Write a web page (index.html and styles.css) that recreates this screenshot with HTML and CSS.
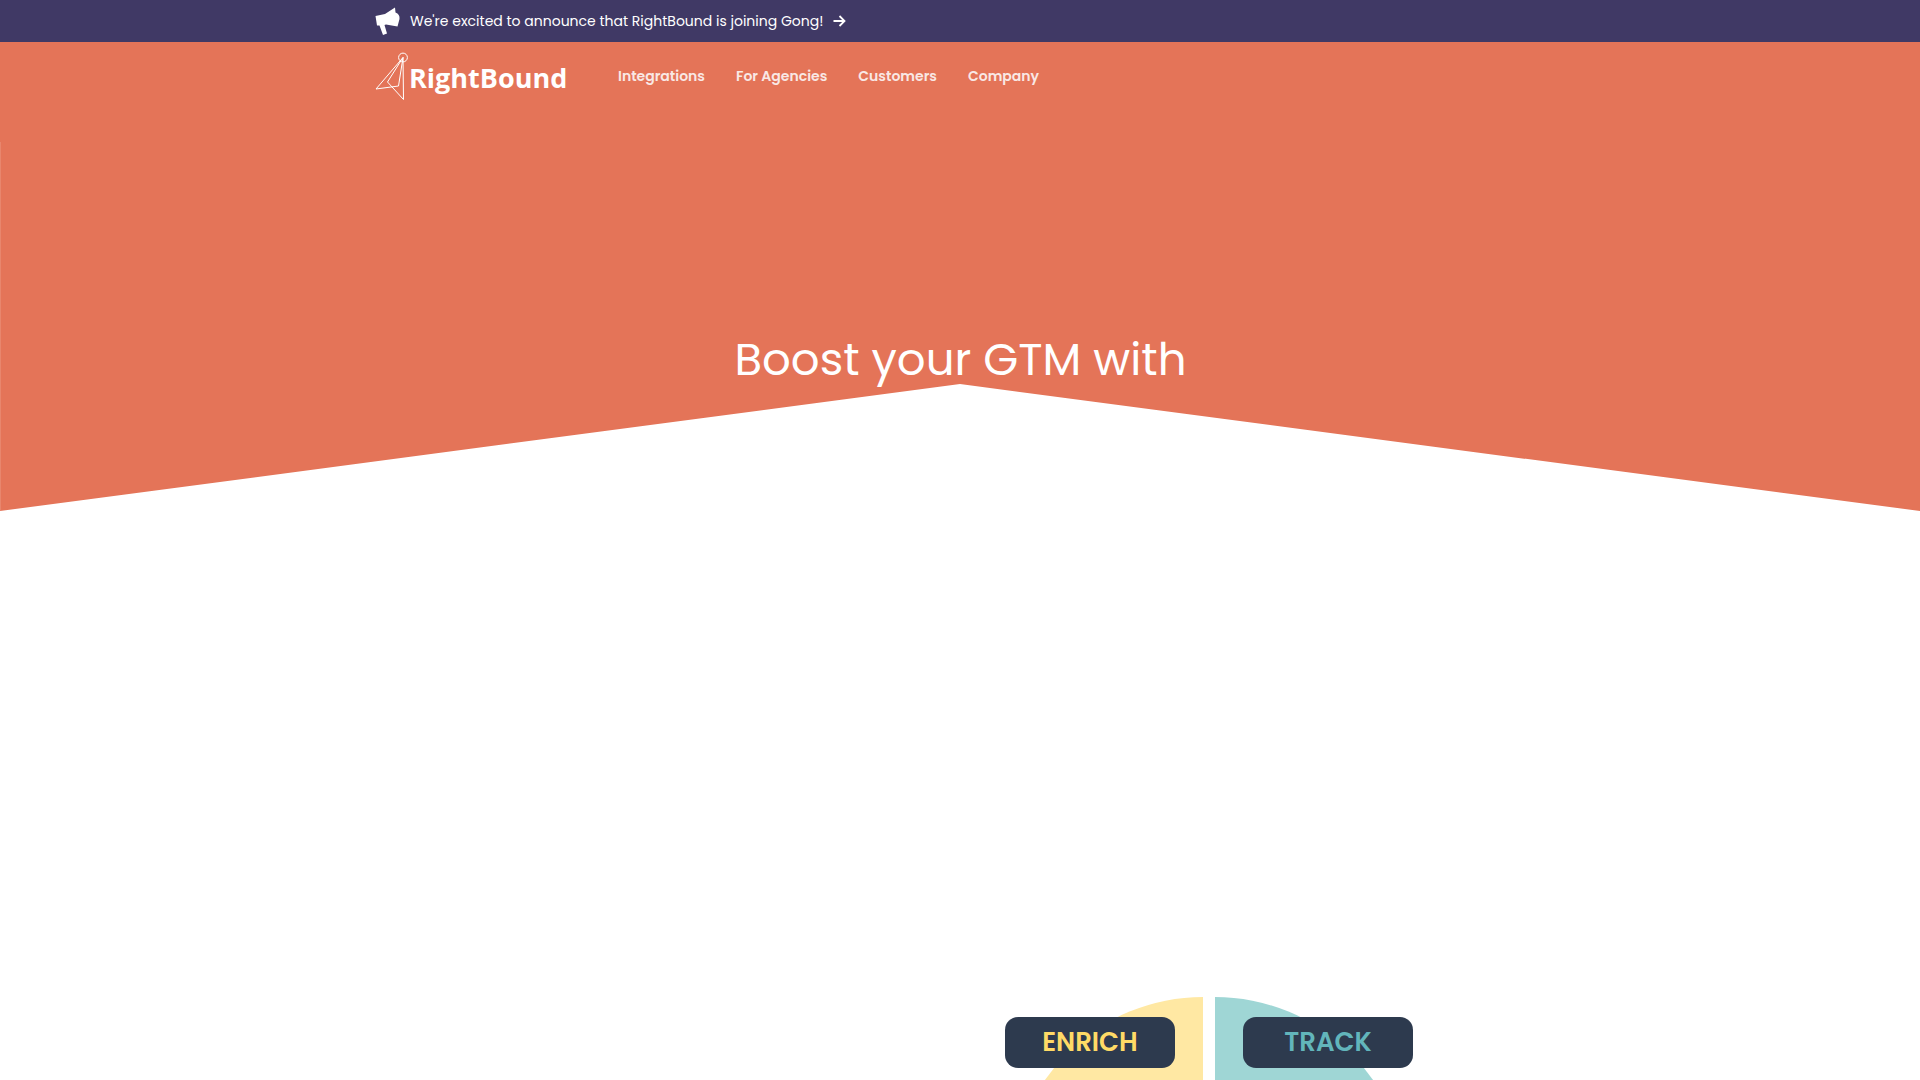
FILE: index.html
```
<!DOCTYPE html>
<html lang="en">
<head>
    <meta charset="UTF-8">
    <meta name="viewport" content="width=device-width, initial-scale=1.0">
    <title>RightBound</title>
    <link rel="stylesheet" href="styles.css">
</head>
<body>

    <!-- Announcement -->
    <div class="announcement">
        <a class="container announcement-link" href="#">
            <svg class="megaphone" width="26" height="30" viewBox="0 0 26 30" aria-hidden="true">
                <path fill="#fff" d="M0.500 10L10 8L20 1.500L20.500 6.500Q25 8 24.500 13L22.500 20.500L11 18.500L9.500 19L12 27.500L8 29L4.500 19.500L2 19.500Z"/>
            </svg>
            <span>We're excited to announce that RightBound is joining Gong!</span>
            <svg class="arrow" width="13" height="12" viewBox="0 0 13 12" aria-hidden="true">
                <path fill="none" stroke="#fff" stroke-width="1.800" d="M0.500 6H11.500M6.500 1L11.500 6L6.500 11"/>
            </svg>
        </a>
    </div>

    <!-- Header -->
    <header class="header">
        <div class="container header-inner">
            <a class="logo" href="#">
                <svg width="34" height="48" viewBox="0 0 34 48" fill="none" stroke="#fff" aria-hidden="true">
                    <circle cx="28" cy="5.500" r="4.400"/>
                    <path d="M28 5.500L1 37L23.500 34L28 5.500L12.500 30L28.500 47.500L28 5.500Z"/>
                </svg>
                <span class="logo-text">RightBound</span>
            </a>
            <nav class="nav">
                <a href="#">Integrations</a>
                <a href="#">For Agencies</a>
                <a href="#">Customers</a>
                <a href="#">Company</a>
            </nav>
        </div>
    </header>

    <!-- Hero -->
    <section class="hero">
        <h1>Boost your GTM with</h1>
    </section>

    <!-- Cycle diagram -->
    <section class="container cycle">
        <div class="wheel">
            <div class="quarter enrich"><span class="label">ENRICH</span></div>
            <div class="quarter track"><span class="label">TRACK</span></div>
        </div>
    </section>

</body>
</html>
```
FILE: styles.css
```
* {
    box-sizing: border-box;
}
body {
    margin: 0;
    min-height: 100vh;
    display: flex;
    flex-direction: column;
    background: #fff;
    font-family: Poppins, Inter, sans-serif;
}
a {
    color: inherit;
    text-decoration: none;
}
.container {
    width: 100%;
    max-width: 1170px;
    margin: 0 auto;
}
.announcement {
    background: #403965;
    color: #fff;
    font-size: 14px;
}
.announcement-link {
    display: flex;
    align-items: center;
    height: 42px;
}
.megaphone {
    margin-right: 9px;
}
.arrow {
    margin-left: 10px;
}
.header {
    padding-bottom: 32px;
    background: #e47458;
}
.header-inner {
    display: flex;
    align-items: center;
    height: 68px;
}
.logo {
    display: flex;
    align-items: center;
    width: 243px;
    color: #fff;
    font-family: "Open Sans", sans-serif;
    font-size: 27px;
    font-weight: 700;
}
.logo-text {
    padding-top: 3px;
}
.nav {
    display: flex;
    gap: 31px;
    color: #f9e8e5;
    font-size: 14px;
    font-weight: 600;
}
.hero {
    height: 369px;
    padding-top: 183px;
    border-left: 1px solid #e8866d;
    background: #e47458;
    clip-path: polygon(0 0, 100% 0, 100% 100%, 50% 242px, 0 100%);
    color: #fff;
    text-align: center;
}
.hero h1 {
    margin: 0;
    font-size: 45px;
    line-height: 70px;
    font-weight: 400;
}
.cycle {
    display: flex;
    flex: 1;
    justify-content: flex-end;
    margin-top: 486px;
    padding-right: 106px;
}
.wheel {
    display: grid;
    grid-template-columns: 192px 192px;
    gap: 12px;
    padding: 0 32px;
    overflow: hidden;
}
.quarter {
    position: relative;
    min-height: 83px;
}
.quarter::before {
    content: "";
    position: absolute;
    top: 0;
    left: 0;
    width: 192px;
    height: 192px;
}
.enrich::before {
    background: #ffe8a3;
    border-radius: 192px 0 0 0;
}
.track::before {
    background: #9fd6d5;
    border-radius: 0 192px 0 0;
}
.label {
    position: absolute;
    top: 20px;
    width: 170px;
    border-radius: 13px;
    background: #2d3a4e;
    font-size: 26px;
    line-height: 51px;
    font-weight: 600;
    text-align: center;
}
.enrich .label {
    right: 28px;
    color: #ffda66;
}
.track .label {
    left: 28px;
    color: #62b5bb;
}
```
